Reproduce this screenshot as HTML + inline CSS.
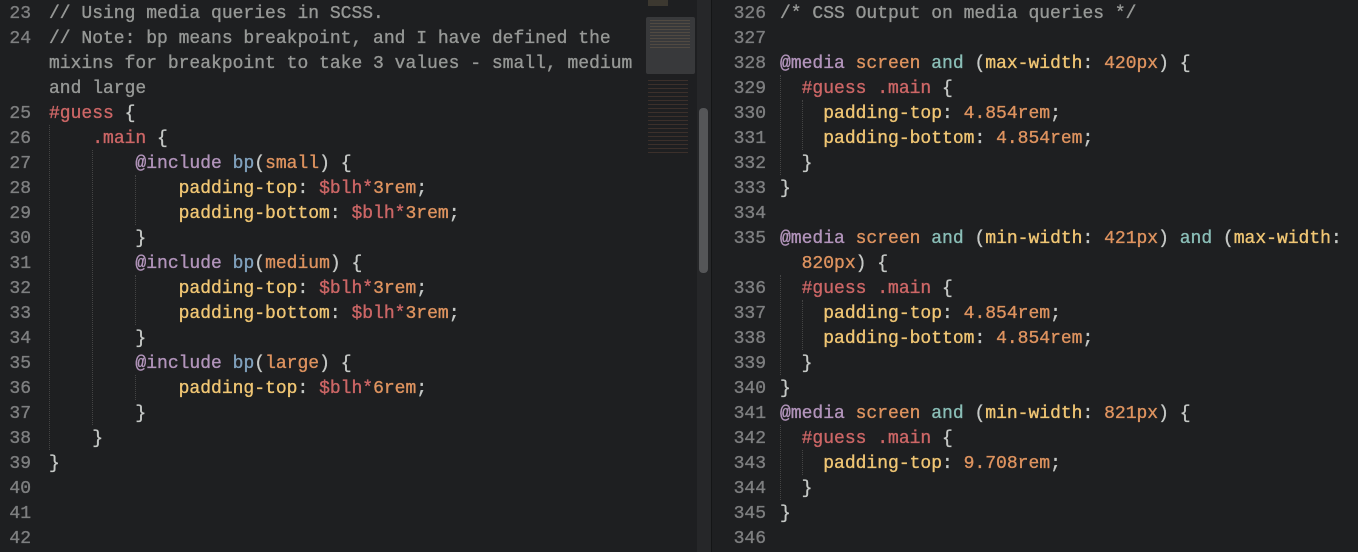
<!DOCTYPE html>
<html><head><meta charset="utf-8"><style>
html,body{margin:0;padding:0;background:#1e1f21;width:1358px;height:552px;overflow:hidden}
body{position:relative;font-family:"Liberation Mono",monospace;font-size:18px;color:#c5c8c6;-webkit-text-stroke:0.35px currentColor}
.l{position:absolute;height:25px;line-height:25px;white-space:pre;margin-top:2px}
.n{position:absolute;height:25px;line-height:25px;color:#7e7f80;text-align:right;white-space:pre;margin-top:2px}
.c{color:#969896}.p{color:#b294bb}.r{color:#cc6666}.o{color:#de935f}.y{color:#f0c674}.b{color:#81a2be}.t{color:#8abeb7}
.g{position:absolute;border-left:1px dotted #444;width:0}
</style></head><body>
<div style="position:absolute;left:697px;top:0;width:14px;height:552px;background:#262729"></div>
<div style="position:absolute;left:699px;top:108px;width:9px;height:165px;background:#555658;border-radius:4px"></div>
<div style="position:absolute;left:711px;top:0;width:1px;height:552px;background:#141516"></div>
<div style="position:absolute;left:646px;top:17px;width:49px;height:57px;background:#38393b;border-radius:2px"></div>
<div style="position:absolute;left:648px;top:0;width:20px;height:6px;background:#5a5240;opacity:.5"></div>
<div style="position:absolute;left:650px;top:20px;width:40px;height:30px;background:repeating-linear-gradient(#6a5a4a 0 1px,transparent 1px 3px);opacity:.5"></div>
<div style="position:absolute;left:648px;top:80px;width:40px;height:75px;background:repeating-linear-gradient(#6a4a3a 0 1px,transparent 1px 4px);opacity:.4"></div>

<div class="g" style="left:49px;top:125px;height:325px"></div>
<div class="g" style="left:92px;top:150px;height:275px"></div>
<div class="g" style="left:135px;top:175px;height:50px"></div>
<div class="g" style="left:135px;top:275px;height:50px"></div>
<div class="g" style="left:135px;top:375px;height:25px"></div>
<div class="g" style="left:780px;top:75px;height:100px"></div>
<div class="g" style="left:802px;top:100px;height:50px"></div>
<div class="g" style="left:780px;top:275px;height:100px"></div>
<div class="g" style="left:802px;top:300px;height:50px"></div>
<div class="g" style="left:780px;top:425px;height:75px"></div>
<div class="g" style="left:802px;top:450px;height:25px"></div>

<div class="n" style="left:0;width:31px;top:0">23</div>
<div class="n" style="left:0;width:31px;top:25px">24</div>
<div class="n" style="left:0;width:31px;top:100px">25</div>
<div class="n" style="left:0;width:31px;top:125px">26</div>
<div class="n" style="left:0;width:31px;top:150px">27</div>
<div class="n" style="left:0;width:31px;top:175px">28</div>
<div class="n" style="left:0;width:31px;top:200px">29</div>
<div class="n" style="left:0;width:31px;top:225px">30</div>
<div class="n" style="left:0;width:31px;top:250px">31</div>
<div class="n" style="left:0;width:31px;top:275px">32</div>
<div class="n" style="left:0;width:31px;top:300px">33</div>
<div class="n" style="left:0;width:31px;top:325px">34</div>
<div class="n" style="left:0;width:31px;top:350px">35</div>
<div class="n" style="left:0;width:31px;top:375px">36</div>
<div class="n" style="left:0;width:31px;top:400px">37</div>
<div class="n" style="left:0;width:31px;top:425px">38</div>
<div class="n" style="left:0;width:31px;top:450px">39</div>
<div class="n" style="left:0;width:31px;top:475px">40</div>
<div class="n" style="left:0;width:31px;top:500px">41</div>
<div class="n" style="left:0;width:31px;top:525px">42</div>

<div class="l c" style="left:49px;top:0">// Using media queries in SCSS.</div>
<div class="l c" style="left:49px;top:25px">// Note: bp means breakpoint, and I have defined the</div>
<div class="l c" style="left:49px;top:50px">mixins for breakpoint to take 3 values - small, medium</div>
<div class="l c" style="left:49px;top:75px">and large</div>
<div class="l" style="left:49px;top:100px"><span class="r">#guess</span> {</div>
<div class="l" style="left:49px;top:125px">    <span class="r">.main</span> {</div>
<div class="l" style="left:49px;top:150px">        <span class="p">@include</span> <span class="b">bp</span>(<span class="o">small</span>) {</div>
<div class="l" style="left:49px;top:175px">            <span class="y">padding-top</span>: <span class="r">$blh*</span><span class="o">3rem</span>;</div>
<div class="l" style="left:49px;top:200px">            <span class="y">padding-bottom</span>: <span class="r">$blh*</span><span class="o">3rem</span>;</div>
<div class="l" style="left:49px;top:225px">        }</div>
<div class="l" style="left:49px;top:250px">        <span class="p">@include</span> <span class="b">bp</span>(<span class="o">medium</span>) {</div>
<div class="l" style="left:49px;top:275px">            <span class="y">padding-top</span>: <span class="r">$blh*</span><span class="o">3rem</span>;</div>
<div class="l" style="left:49px;top:300px">            <span class="y">padding-bottom</span>: <span class="r">$blh*</span><span class="o">3rem</span>;</div>
<div class="l" style="left:49px;top:325px">        }</div>
<div class="l" style="left:49px;top:350px">        <span class="p">@include</span> <span class="b">bp</span>(<span class="o">large</span>) {</div>
<div class="l" style="left:49px;top:375px">            <span class="y">padding-top</span>: <span class="r">$blh*</span><span class="o">6rem</span>;</div>
<div class="l" style="left:49px;top:400px">        }</div>
<div class="l" style="left:49px;top:425px">    }</div>
<div class="l" style="left:49px;top:450px">}</div>

<div class="n" style="left:720px;width:46px;top:0">326</div>
<div class="n" style="left:720px;width:46px;top:25px">327</div>
<div class="n" style="left:720px;width:46px;top:50px">328</div>
<div class="n" style="left:720px;width:46px;top:75px">329</div>
<div class="n" style="left:720px;width:46px;top:100px">330</div>
<div class="n" style="left:720px;width:46px;top:125px">331</div>
<div class="n" style="left:720px;width:46px;top:150px">332</div>
<div class="n" style="left:720px;width:46px;top:175px">333</div>
<div class="n" style="left:720px;width:46px;top:200px">334</div>
<div class="n" style="left:720px;width:46px;top:225px">335</div>
<div class="n" style="left:720px;width:46px;top:275px">336</div>
<div class="n" style="left:720px;width:46px;top:300px">337</div>
<div class="n" style="left:720px;width:46px;top:325px">338</div>
<div class="n" style="left:720px;width:46px;top:350px">339</div>
<div class="n" style="left:720px;width:46px;top:375px">340</div>
<div class="n" style="left:720px;width:46px;top:400px">341</div>
<div class="n" style="left:720px;width:46px;top:425px">342</div>
<div class="n" style="left:720px;width:46px;top:450px">343</div>
<div class="n" style="left:720px;width:46px;top:475px">344</div>
<div class="n" style="left:720px;width:46px;top:500px">345</div>
<div class="n" style="left:720px;width:46px;top:525px">346</div>

<div class="l c" style="left:780px;top:0">/* CSS Output on media queries */</div>
<div class="l" style="left:780px;top:50px"><span class="p">@media</span> <span class="o">screen</span> <span class="t">and</span> (<span class="y">max-width</span>: <span class="o">420px</span>) {</div>
<div class="l" style="left:780px;top:75px">  <span class="r">#guess .main</span> {</div>
<div class="l" style="left:780px;top:100px">    <span class="y">padding-top</span>: <span class="o">4.854rem</span>;</div>
<div class="l" style="left:780px;top:125px">    <span class="y">padding-bottom</span>: <span class="o">4.854rem</span>;</div>
<div class="l" style="left:780px;top:150px">  }</div>
<div class="l" style="left:780px;top:175px">}</div>
<div class="l" style="left:780px;top:225px"><span class="p">@media</span> <span class="o">screen</span> <span class="t">and</span> (<span class="y">min-width</span>: <span class="o">421px</span>) <span class="t">and</span> (<span class="y">max-width</span>:</div>
<div class="l" style="left:780px;top:250px">  <span class="o">820px</span>) {</div>
<div class="l" style="left:780px;top:275px">  <span class="r">#guess .main</span> {</div>
<div class="l" style="left:780px;top:300px">    <span class="y">padding-top</span>: <span class="o">4.854rem</span>;</div>
<div class="l" style="left:780px;top:325px">    <span class="y">padding-bottom</span>: <span class="o">4.854rem</span>;</div>
<div class="l" style="left:780px;top:350px">  }</div>
<div class="l" style="left:780px;top:375px">}</div>
<div class="l" style="left:780px;top:400px"><span class="p">@media</span> <span class="o">screen</span> <span class="t">and</span> (<span class="y">min-width</span>: <span class="o">821px</span>) {</div>
<div class="l" style="left:780px;top:425px">  <span class="r">#guess .main</span> {</div>
<div class="l" style="left:780px;top:450px">    <span class="y">padding-top</span>: <span class="o">9.708rem</span>;</div>
<div class="l" style="left:780px;top:475px">  }</div>
<div class="l" style="left:780px;top:500px">}</div>
</body></html>
